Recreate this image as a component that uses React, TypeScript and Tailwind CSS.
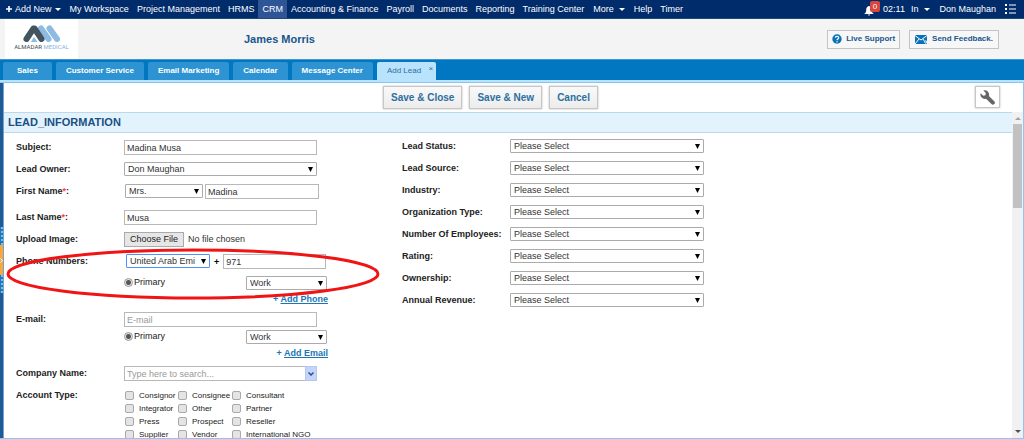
import type { ReactNode } from "react";

const modules = [
  "My Workspace",
  "Project Management",
  "HRMS",
  "CRM",
  "Accounting & Finance",
  "Payroll",
  "Documents",
  "Reporting",
  "Training Center",
];

const tabs = ["Sales", "Customer Service", "Email Marketing", "Calendar", "Message Center"];

const leadFields = [
  "Lead Status",
  "Lead Source",
  "Industry",
  "Organization Type",
  "Number Of Employees",
  "Rating",
  "Ownership",
  "Annual Revenue",
];

const accountTypes = [
  "Consignor",
  "Consignee",
  "Consultant",
  "Integrator",
  "Other",
  "Partner",
  "Press",
  "Prospect",
  "Reseller",
  "Supplier",
  "Vendor",
  "International NGO",
];

const inputClass =
  "h-[15px] border border-[#b8b8b8] bg-white px-[2px] text-[9px] text-[#333] placeholder:text-[#999] outline-none";

function Caret() {
  return (
    <svg viewBox="0 0 6 3" className="mt-px h-[3px] w-[6px] fill-current">
      <path d="M0 0h6L3 3z" />
    </svg>
  );
}

function SelectBox({
  id,
  value,
  className,
  label,
  active,
}: {
  id: string;
  value: string;
  className: string;
  label?: string;
  active?: boolean;
}) {
  return (
    <div className={`relative ${className}`}>
      <select
        id={id}
        aria-label={label}
        className={`block h-[14px] w-full appearance-none rounded-[1px] border bg-white pr-3 pl-[3px] text-[9px] text-[#333] outline-none ${
          active ? "border-[#4d90fe]" : "border-[#ababab]"
        }`}
      >
        <option>{value}</option>
      </select>
      <svg
        viewBox="0 0 5 5"
        className="pointer-events-none absolute top-[5px] right-[4px] h-[5px] w-[5px] fill-black"
      >
        <path d="M0 0h5L2.5 5z" />
      </svg>
    </div>
  );
}

function Row({
  label,
  id,
  required,
  className = "h-[22px]",
  children,
}: {
  label: string;
  id?: string;
  required?: boolean;
  className?: string;
  children: ReactNode;
}) {
  return (
    <div className={`flex items-start ${className}`}>
      <label htmlFor={id} className="w-[108px] shrink-0 leading-[14px] font-bold text-[#222]">
        {label}
        {required && <span className="text-[#ff3b3b]">*</span>}:
      </label>
      {children}
    </div>
  );
}

function PrimaryRow({ id }: { id: string }) {
  return (
    <div className="flex h-[14px] w-[203px] items-start justify-between">
      <label className="flex items-center gap-px leading-[12px] text-[#222]">
        <input
          type="radio"
          name={id}
          defaultChecked
          className="h-[9px] w-[9px] appearance-none rounded-full border border-[#999] bg-[radial-gradient(circle,#555_0_2px,#e4e4e4_3px)]"
        />
        Primary
      </label>
      <SelectBox id={id + "-type"} label="Type" value="Work" className="w-[81px]" />
    </div>
  );
}

function AddLink({ text }: { text: string }) {
  return (
    <div className="w-[204px] text-right leading-[14px] font-bold text-[#1a76b5]">
      + <a href="#" className="underline">{text}</a>
    </div>
  );
}

function TopBar() {
  return (
    <nav className="flex h-[19px] shrink-0 items-stretch border-b border-[#1f4a80] bg-[#002c6b] text-[9px] leading-[18px] whitespace-nowrap text-white">
      <a href="#" className="flex items-center gap-[3px] pr-[5px] pl-[6px]">
        <svg viewBox="0 0 6 6" className="h-[6px] w-[6px] fill-current">
          <path d="M2.2 0h1.6v2.2H6v1.6H3.8V6H2.2V3.8H0V2.2h2.2z" />
        </svg>
        Add New
        <Caret />
      </a>
      {modules.map((name) => (
        <a
          key={name}
          href="#"
          className={name === "CRM" ? "bg-[#2f5597] px-[4px]" : "px-[4px]"}
        >
          {name}
        </a>
      ))}
      <a href="#" className="flex items-center gap-[5px] px-[5px]">
        More
        <Caret />
      </a>
      <a href="#" className="px-[4px]">Help</a>
      <a href="#" className="px-[4px]">Timer</a>
      <div className="ml-auto flex items-center gap-[6px] pr-[8px]">
        <button aria-label="Notifications" className="relative flex h-full w-[13px] items-center">
          <svg viewBox="0 0 10 10" className="mt-1 h-[10px] w-[10px] fill-white">
            <path d="M5 0C3 .6 2.2 2 2.2 4c0 2-.7 3-2 4h9.600c-1.300-1-2-2-2-4C7.800 2 7 .6 5 0zM3.800 8.600h2.400L5 10z" />
          </svg>
          <span className="absolute top-[1px] left-[6px] h-[11px] w-[10px] rounded-[2px] bg-[#d9453f] text-center text-[8px] leading-[11px]">
            0
          </span>
        </button>
        <span>02:11</span>
        <button className="flex items-center gap-[6px]">
          In
          <Caret />
        </button>
        <a href="#" className="px-[3px]">Don Maughan</a>
        <button aria-label="Menu">
          <svg viewBox="0 0 11 10" className="h-[10px] w-[11px] fill-white">
            <path d="M0 0h2v2H0zM4 .5h7v1H4zM0 4h2v2H0zM4 4.500h7v1H4zM0 8h2v2H0zM4 8.500h7v1H4z" />
          </svg>
        </button>
      </div>
    </nav>
  );
}

function Logo() {
  return (
    <div className="ml-[5px] flex h-[40px] w-[73px] flex-col items-center bg-white pt-[6px]">
      <svg viewBox="0 0 38 17" className="h-[17px] w-[38px]" fill="none" strokeLinecap="round">
        <path d="M18 3.500l7.500 10.500M26.500 3.500l7.500 10.500" stroke="#8dbbe2" strokeWidth="6" />
        <path d="M3.500 14 10.500 3.500h1L18.500 14" stroke="#43545f" strokeWidth="6" strokeLinejoin="round" />
        <path d="M8.500 17 11 12.500 14 17z" fill="#8dbbe2" stroke="#8dbbe2" strokeWidth="1" />
      </svg>
      <div className="font-[Roboto,sans-serif] text-[6px] leading-[9px] font-normal whitespace-nowrap text-[#3c4852]">
        ALMADAR <span className="text-[#7fb3e0]">MEDICAL</span>
      </div>
    </div>
  );
}

function Header() {
  return (
    <header className="flex h-[40px] shrink-0 items-center bg-[#f4f4f4] font-bold text-[#17568c]">
      <Logo />
      <h1 className="ml-[166px] text-[11px]">James Morris</h1>
      <div className="mr-[25px] ml-auto flex gap-[9px] text-[8px]">
        <button className="flex h-[19px] items-center gap-1 border border-[#c4c4c4] bg-[#f7f7f7] px-1">
          <svg viewBox="0 0 10 10" className="h-[10px] w-[10px]">
            <circle cx="5" cy="5" r="4.700" fill="#0a72b8" />
            <path d="M3.300 3.800C3.400 1.900 6.800 2 6.700 3.900 6.600 5 5 4.900 5 6.200M5 7.200v1.200" fill="none" stroke="#fff" strokeWidth="1.200" />
          </svg>
          Live Support
        </button>
        <button className="flex h-[19px] items-center gap-1 border border-[#c4c4c4] bg-[#f7f7f7] px-[5px]">
          <svg viewBox="0 0 13 9" className="h-[9px] w-[13px]">
            <path d="M0 0h12v9H0z" fill="#0a72b8" />
            <path d="M0 .5l6 4.500 6-4.500M0 9l4-5M9.500 6.500 8 4" fill="none" stroke="#fff" />
            <path d="M9 7h2.500M10.500 5.500 12.500 7l-2 1.500" fill="none" stroke="#fff" />
          </svg>
          Send Feedback.
        </button>
      </div>
    </header>
  );
}

function TabBar() {
  return (
    <div className="flex h-[21px] shrink-0 items-end gap-1 border-t border-[#3c97d3] bg-[#0077c0] pl-[3px] text-[8px] leading-[18px] whitespace-nowrap text-white">
      {tabs.map((name) => (
        <button key={name} className="h-[18px] rounded-t-[2px] bg-[#2e93d2] px-[10px] font-bold first:px-[14px]">
          {name}
        </button>
      ))}
      <button className="relative h-[18px] rounded-t-[2px] bg-[#b9e3fc] pr-[15px] pl-[10px] text-[#2e6f9f]">
        Add Lead
        <span className="absolute top-0 right-[3px] leading-[14px]">×</span>
      </button>
    </div>
  );
}

function Toolbar() {
  const buttonClass =
    "h-[23px] border border-[#c6c6c6] bg-linear-to-b from-[#f9f9f9] to-[#ececec] px-[7px] text-[10px] font-bold text-[#2c6f9f] shadow-[0_0_2px_#bbb]";

  return (
    <div className="relative flex h-[29px] shrink-0 items-center justify-center gap-[7px] pr-[46px]">
      <button className={buttonClass}>Save &amp; Close</button>
      <button className={buttonClass}>Save &amp; New</button>
      <button className={buttonClass}>Cancel</button>
      <button
        aria-label="Settings"
        className="absolute top-[3px] right-[23px] flex h-[22px] w-[25px] items-center justify-center border border-[#c6c6c6] bg-white shadow-[0_0_2px_#bbb]"
      >
        <svg viewBox="0 0 16 16" className="h-[15px] w-[15px] fill-[#666]">
          <path d="M3.500.6a4.600 4.600 0 0 1 6 5.700l5.700 5.700a2.100 2.100 0 0 1-3 3L6.400 9.300A4.600 4.600 0 0 1 .7 3.400L3.400 6l2.300-.5.500-2.200z" />
        </svg>
      </button>
    </div>
  );
}

function SideHandle() {
  return (
    <aside className="flex w-[4px] shrink-0 flex-col border-r border-[#6fa5d2] bg-[#205a93] pt-[144px]">
      <div className="h-[18px] border-r-2 border-dotted border-[#7fbbe8] bg-[#1f78b8]" />
      <button aria-label="Expand sidebar" className="flex h-[30px] items-center bg-[#f9a63a]">
        <svg viewBox="0 0 3 5" className="h-[5px] w-[3px] fill-none stroke-white">
          <path d="M.5.500l2 2-2 2" />
        </svg>
      </button>
      <div className="h-[18px] border-r-2 border-dotted border-[#7fbbe8] bg-[#1f78b8]" />
    </aside>
  );
}

function ScrollBar() {
  return (
    <div className="flex w-[11px] shrink-0 flex-col items-center bg-[#f1f1f1] py-[5px]">
      <svg viewBox="0 0 6 3" className="h-[3px] w-[6px] fill-[#a3a3a3]">
        <path d="M0 3h6L3 0z" />
      </svg>
      <div className="mt-[4px] h-[84px] w-[9px] bg-[#c1c1c1]" />
      <svg viewBox="0 0 6 3" className="mt-auto h-[3px] w-[6px] fill-[#505050]">
        <path d="M0 0h6L3 3z" />
      </svg>
    </div>
  );
}

function LeadForm() {
  return (
    <form className="relative flex items-start pl-[12px]">
      <div className="w-[386px] shrink-0 pt-[7px]">
        <Row label="Subject" id="subject">
          <input id="subject" defaultValue="Madina Musa" className={`w-[193px] ${inputClass}`} />
        </Row>
        <Row label="Lead Owner" id="owner">
          <SelectBox id="owner" value="Don Maughan" className="w-[193px]" />
        </Row>
        <Row label="First Name" id="first-name" required className="h-[26px]">
          <div className="flex gap-[2px] pl-px">
            <SelectBox id="title" label="Title" value="Mrs." className="w-[78px]" />
            <input id="first-name" defaultValue="Madina" className={`w-[114px] ${inputClass}`} />
          </div>
        </Row>
        <Row label="Last Name" id="last-name" required>
          <input id="last-name" defaultValue="Musa" className={`w-[193px] ${inputClass}`} />
        </Row>
        <Row label="Upload Image" id="image">
          <input
            id="image"
            type="file"
            className="h-[15px] w-[193px] text-[9px] leading-[13px] text-[#333] file:mr-[4px] file:h-[15px] file:border file:border-solid file:border-[#aaa] file:bg-[#e6e6e6] file:px-[5px] file:leading-[13px] file:text-[#222]"
          />
        </Row>
        <Row label="Phone Numbers" id="phone" className="h-[58px]">
          <div>
            <div className="flex h-[22px] items-start gap-[4px] pl-[2px]">
              <SelectBox id="country" label="Country" value="United Arab Emi" className="w-[84px]" active />
              <span className="leading-[16px] font-bold text-black">+</span>
              <input id="phone" defaultValue="971" className={`w-[103px] ${inputClass}`} />
            </div>
            <PrimaryRow id="primary-phone" />
            <div className="pt-[2px]">
              <AddLink text="Add Phone" />
            </div>
          </div>
        </Row>
        <Row label="E-mail" id="email" className="h-[54px]">
          <div>
            <div className="h-[18px]">
              <input id="email" placeholder="E-mail" className={`block w-[193px] ${inputClass}`} />
            </div>
            <PrimaryRow id="primary-email" />
            <div className="pt-[2px]">
              <AddLink text="Add Email" />
            </div>
          </div>
        </Row>
        <Row label="Company Name" id="company">
          <div className="flex w-[193px]">
            <input
              id="company"
              placeholder="Type here to search..."
              className={`min-w-0 flex-1 border-r-0 ${inputClass}`}
            />
            <button
              type="button"
              aria-label="Show companies"
              className="flex h-[15px] w-[12px] items-center justify-center border border-[#b5c8ec] bg-[#c3d5fb]"
            >
              <svg viewBox="0 0 6 4" className="h-[4px] w-[6px] fill-none stroke-[#34507d] stroke-[1.5]">
                <path d="M.5.500 3 3 5.500.5" />
              </svg>
            </button>
          </div>
        </Row>
        <Row label="Account Type" className="h-[60px]">
          <div className="grid grid-cols-[53px_54px_90px] pt-px pl-px text-[8px] whitespace-nowrap text-[#222]">
            {accountTypes.map((type) => (
              <label key={type} className="flex h-[13px] items-center gap-[5px]">
                <input
                  type="checkbox"
                  className="h-[9px] w-[9px] shrink-0 appearance-none rounded-[2px] border border-[#a9a9a9] bg-[#e4e4e4]"
                />
                {type}
              </label>
            ))}
          </div>
        </Row>
      </div>

      <div className="pt-[6px]">
        {leadFields.map((name) => (
          <Row key={name} label={name} id={name}>
            <SelectBox id={name} value="Please Select" className="w-[194px]" />
          </Row>
        ))}
      </div>

      {/* highlight around the phone fields */}
      <svg
        viewBox="0 0 376 54"
        className="pointer-events-none absolute top-[114px] left-[1px] h-[54px] w-[376px]"
      >
        <ellipse cx="188" cy="27" rx="185" ry="24" fill="none" stroke="#f01414" strokeWidth="3" />
      </svg>
    </form>
  );
}

export default function App() {
  return (
    <div className="flex h-screen flex-col overflow-hidden bg-white font-['Liberation_Sans',Arial,sans-serif] text-[9px]">
      <TopBar />
      <Header />
      <TabBar />
      <div className="h-[3px] shrink-0 border-b border-[#84c5f5] bg-[#b9e3fc]" />
      <main className="flex min-h-0 flex-1 border-r border-b border-[#8cc6f7]">
        <SideHandle />
        <div className="flex min-w-0 flex-1 flex-col">
          <Toolbar />
          <div className="flex min-h-0 flex-1">
            <div className="min-w-0 flex-1 overflow-hidden">
              <h2 className="h-[21px] border-y border-[#bcd9ea] bg-[#e2f3fe] pl-[4px] text-[11px] leading-[19px] font-bold text-[#1c4f82]">
                LEAD_INFORMATION
              </h2>
              <LeadForm />
            </div>
            <ScrollBar />
          </div>
        </div>
      </main>
    </div>
  );
}
